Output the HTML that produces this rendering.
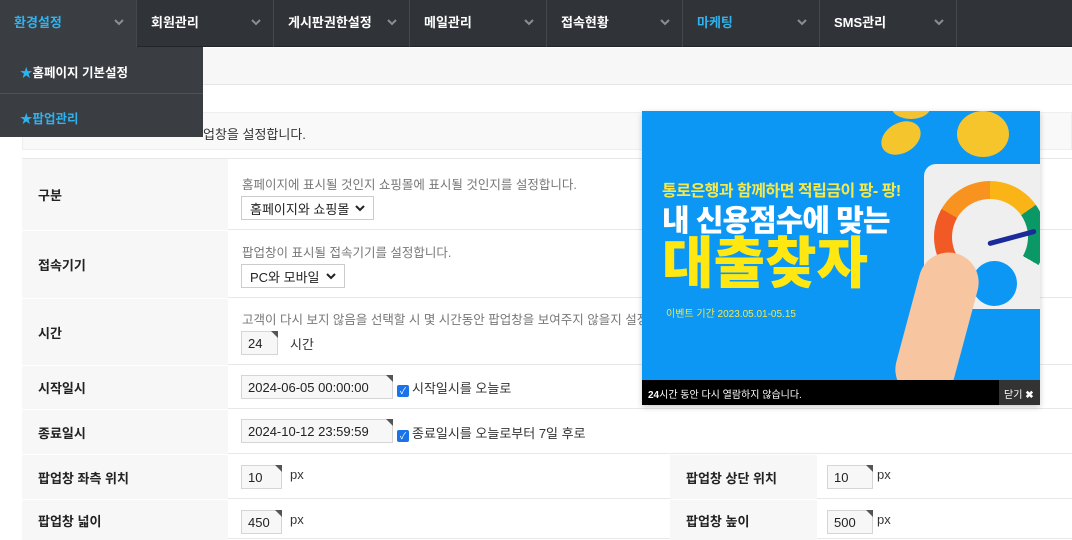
<!DOCTYPE html>
<html><head><meta charset="utf-8"><style>
*{margin:0;padding:0;box-sizing:border-box}
body{width:1072px;height:535px;overflow:hidden;background:#fff;font-family:"Liberation Sans","Noto Sans CJK KR",sans-serif;font-size:13px;color:#333;position:relative}
.a{position:absolute}
.nav{left:0;top:0;width:1072px;height:47px;background:#303338;border-bottom:1px solid #23252a}
.ni{top:0;height:47px;border-right:1px solid #44474c;color:#fff;font-weight:bold;font-size:13px;padding:12px 0 0 14px}
.ni svg{position:absolute;right:12px;top:19px}
.row{left:22px;width:1050px;border-bottom:1px solid #e8e8e8}
.lab{left:22px;width:206px;background:#f7f7f7;font-weight:bold;color:#222;padding-left:16px;display:flex;align-items:center}
.sel{border:1px solid #ccc;background:#fff;height:24px;padding:0 8px;font-size:13px;color:#222;white-space:nowrap;display:flex;align-items:center;gap:6px}
.inp{border:1px solid #d5d5d5;background:#f7f7f7;height:24px;padding:0 6px;font-size:13px;color:#222;display:flex;align-items:center;white-space:nowrap}
.tri{position:absolute;right:-1px;top:-1px;width:0;height:0;border-left:7px solid transparent;border-top:7px solid #555}
.hint{color:#777;font-size:12.5px;white-space:nowrap}
.cb{display:inline-block;width:12px;height:12px;background:#1a73e8;border-radius:2px;color:#fff;font-size:9px;line-height:12px;text-align:center;vertical-align:-1px;margin-right:3px}
</style></head><body>
<div class="a nav"></div>
<div class="a ni" style="left:0;width:137px;background:#3a3d42;color:#2fb3ef">환경설정<svg width="10" height="7"><path d="M1 1l4 4 4-4" stroke="#8a8d92" stroke-width="2" fill="none"/></svg></div>
<div class="a ni" style="left:137px;width:137px">회원관리<svg width="10" height="7"><path d="M1 1l4 4 4-4" stroke="#8a8d92" stroke-width="2" fill="none"/></svg></div>
<div class="a ni" style="left:274px;width:136px">게시판권한설정<svg width="10" height="7"><path d="M1 1l4 4 4-4" stroke="#8a8d92" stroke-width="2" fill="none"/></svg></div>
<div class="a ni" style="left:410px;width:137px">메일관리<svg width="10" height="7"><path d="M1 1l4 4 4-4" stroke="#8a8d92" stroke-width="2" fill="none"/></svg></div>
<div class="a ni" style="left:547px;width:136px">접속현황<svg width="10" height="7"><path d="M1 1l4 4 4-4" stroke="#8a8d92" stroke-width="2" fill="none"/></svg></div>
<div class="a ni" style="left:683px;width:137px;color:#2fb3ef">마케팅<svg width="10" height="7"><path d="M1 1l4 4 4-4" stroke="#8a8d92" stroke-width="2" fill="none"/></svg></div>
<div class="a ni" style="left:820px;width:137px">SMS관리<svg width="10" height="7"><path d="M1 1l4 4 4-4" stroke="#8a8d92" stroke-width="2" fill="none"/></svg></div>

<div class="a" style="left:0;top:48px;width:1072px;height:37px;background:#f7f7f7;border-bottom:1px solid #e5e5e5"></div>
<div class="a" style="left:22px;top:112px;width:1050px;height:38px;background:#f9f9f9;border:1px solid #eee"></div>
<div class="a" style="left:203px;top:124px;font-size:13px;color:#333">업창을 설정합니다.</div>

<div class="a row" style="top:158px;height:72px;border-top:1px solid #e8e8e8"></div>
<div class="a lab" style="top:159px;height:71px">구분</div>
<div class="a hint" style="left:242px;top:174px">홈페이지에 표시될 것인지 쇼핑몰에 표시될 것인지를 설정합니다.</div>
<div class="a sel" style="left:241px;top:196px">홈페이지와 쇼핑몰 <svg width="10" height="7"><path d="M1 1l4 4 4-4" stroke="#222" stroke-width="2" fill="none"/></svg></div>

<div class="a row" style="top:230px;height:68px"></div>
<div class="a lab" style="top:231px;height:67px">접속기기</div>
<div class="a hint" style="left:242px;top:242px">팝업창이 표시될 접속기기를 설정합니다.</div>
<div class="a sel" style="left:241px;top:264px">PC와 모바일 <svg width="10" height="7"><path d="M1 1l4 4 4-4" stroke="#222" stroke-width="2" fill="none"/></svg></div>

<div class="a row" style="top:298px;height:67px"></div>
<div class="a lab" style="top:299px;height:66px">시간</div>
<div class="a hint" style="left:242px;top:309px">고객이 다시 보지 않음을 선택할 시 몇 시간동안 팝업창을 보여주지 않을지 설정</div>
<div class="a inp" style="left:241px;top:331px;width:37px">24<span class="tri"></span></div>
<div class="a" style="left:290px;top:334px">시간</div>

<div class="a row" style="top:365px;height:44px"></div>
<div class="a lab" style="top:366px;height:43px">시작일시</div>
<div class="a inp" style="left:241px;top:375px;width:152px">2024-06-05 00:00:00<span class="tri"></span></div>
<div class="a" style="left:397px;top:378px"><span class="cb">✓</span>시작일시를 오늘로</div>

<div class="a row" style="top:409px;height:45px"></div>
<div class="a lab" style="top:410px;height:44px">종료일시</div>
<div class="a inp" style="left:241px;top:419px;width:152px">2024-10-12 23:59:59<span class="tri"></span></div>
<div class="a" style="left:397px;top:423px"><span class="cb">✓</span>종료일시를 오늘로부터 7일 후로</div>

<div class="a row" style="top:454px;height:45px"></div>
<div class="a lab" style="top:455px;height:44px">팝업창 좌측 위치</div>
<div class="a inp" style="left:241px;top:465px;width:41px">10<span class="tri"></span></div>
<div class="a" style="left:290px;top:467px">px</div>
<div class="a lab" style="left:670px;width:147px;top:455px;height:44px">팝업창 상단 위치</div>
<div class="a inp" style="left:827px;top:465px;width:46px">10<span class="tri"></span></div>
<div class="a" style="left:877px;top:467px">px</div>

<div class="a row" style="top:499px;height:40px"></div>
<div class="a lab" style="top:500px;height:40px">팝업창 넓이</div>
<div class="a inp" style="left:241px;top:510px;width:41px">450<span class="tri"></span></div>
<div class="a" style="left:290px;top:512px">px</div>
<div class="a lab" style="left:670px;width:147px;top:500px;height:40px">팝업창 높이</div>
<div class="a inp" style="left:827px;top:510px;width:46px">500<span class="tri"></span></div>
<div class="a" style="left:877px;top:512px">px</div>

<!-- dropdown -->
<div class="a" style="left:0;top:47px;width:203px;height:90px;background:#3a3d42"></div>
<div class="a" style="left:0;top:93px;width:203px;height:1px;background:#4e5156"></div>
<div class="a" style="left:20px;top:62px;color:#fff;font-weight:bold;font-size:12.5px"><span style="color:#2fb3ef">★</span>홈페이지 기본설정</div>
<div class="a" style="left:20px;top:108px;color:#2fb3ef;font-weight:bold;font-size:12.5px">★팝업관리</div>

<!-- popup -->
<div class="a" style="left:642px;top:111px;width:398px;height:294px;background:#0d97f5;overflow:hidden;box-shadow:0 2px 6px rgba(0,0,0,.2)">
 <div class="a" style="left:250px;top:-14px;width:38px;height:22px;border-radius:50%;background:#f2c230"></div>
 <div class="a" style="left:238px;top:12px;width:42px;height:30px;border-radius:50%;background:#f5c52e;transform:rotate(-30deg)"></div>
 <div class="a" style="left:315px;top:0;width:52px;height:46px;border-radius:50%;background:#f6c52c"></div>
 <div class="a" style="left:282px;top:53px;width:130px;height:145px;border-radius:12px;background:#efefef"></div>
 <div class="a" style="left:292px;top:70px;width:112px;height:112px;border-radius:50%;background:conic-gradient(from 240deg,#f15a24 0 60deg,#f7931e 60deg 120deg,#fbb415 120deg 175deg,#0a9966 175deg 240deg,transparent 240deg)"></div>
 <div class="a" style="left:310px;top:88px;width:76px;height:76px;border-radius:50%;background:#efefef"></div>
 <div class="a" style="left:330px;top:150px;width:45px;height:45px;border-radius:50%;background:#0d97f5"></div>
 <div class="a" style="left:345px;top:124px;width:50px;height:5px;background:#1a2a9a;transform:rotate(-15deg);border-radius:3px"></div>
 <div class="a" style="left:265px;top:140px;width:60px;height:150px;border-radius:30px;background:#f7c5a0;transform:rotate(15deg)"></div>
 <div class="a" style="left:20px;top:72px;color:#f5e84a;font-size:16px;line-height:18px;font-weight:bold;white-space:nowrap;letter-spacing:-.5px">통로은행과 함께하면 적립금이 팡- 팡!</div>
 <div class="a" style="left:20px;top:96px;color:#fff;font-size:30px;line-height:30px;font-weight:900;white-space:nowrap;letter-spacing:-1px">내 신용점수에 맞는</div>
 <div class="a" style="left:20px;top:125px;color:#ffe812;font-size:56px;font-weight:900;white-space:nowrap;letter-spacing:0;line-height:56px">대출찾자</div>
 <div class="a" style="left:24px;top:194px;color:#f5e84a;font-size:10px;white-space:nowrap">이벤트 기간  2023.05.01-05.15</div>
 <div class="a" style="left:0;top:269px;width:398px;height:25px;background:#000;color:#fff;font-size:10px;padding:6px 0 0 6px"><b>24</b>시간 동안 다시 열람하지 않습니다.</div>
 <div class="a" style="left:357px;top:269px;width:41px;height:25px;background:#333;color:#fff;font-size:10px;padding:6px 0 0 5px">닫기 <b>✖</b></div>
</div>
</body></html>
